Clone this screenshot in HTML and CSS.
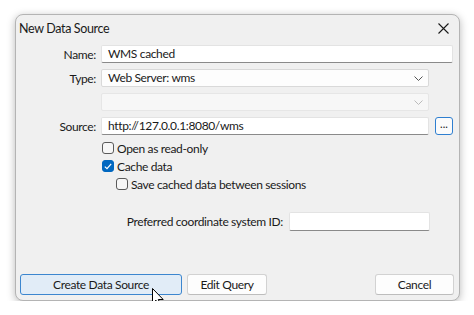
FILE: index.html
```html
<!DOCTYPE html>
<html>
  <head>
    <title>New Data Source</title>
    <link rel="stylesheet" href="styles.css">
  </head>
  <body>
    <article class="dialog">
      <header class="titlebar">
        <span class="title">New Data Source</span>
        <svg class="close" width="11" height="11" viewBox="0 0 11 11">
          <path d="M0.5 0.5 L10.5 10.5 M10.5 0.5 L0.5 10.5" stroke="#1a1a1a" stroke-width="1.1" fill="none"/>
        </svg>
      </header>

      <form class="form">
        <div class="row">
          <label class="label">Name:</label>
          <div class="field wide">WMS cached</div>
        </div>
        <div class="row">
          <label class="label">Type:</label>
          <div class="field select">
            Web Server: wms
            <svg class="chevron" width="9" height="5" viewBox="0 0 9 5"><path d="M0.5 0.5 L4.5 4.5 L8.5 0.5" stroke="#555" fill="none"/></svg>
          </div>
        </div>
        <div class="row">
          <label class="label"></label>
          <div class="field select disabled">
            <svg class="chevron" width="9" height="5" viewBox="0 0 9 5"><path d="M0.5 0.5 L4.5 4.5 L8.5 0.5" stroke="#bbb" fill="none"/></svg>
          </div>
        </div>
        <div class="row">
          <label class="label">Source:</label>
          <div class="field">http://127.0.0.1:8080/wms</div>
          <button type="button" class="browse">...</button>
        </div>

        <div class="checks">
          <div class="check"><span class="box"></span>Open as read-only</div>
          <div class="check"><span class="box checked">
            <svg width="8" height="7" viewBox="0 0 8 7"><path d="M0.8 3.6 L3 5.6 L7.2 0.9" stroke="#fff" stroke-width="1.2" fill="none"/></svg>
          </span>Cache data</div>
          <div class="check sub"><span class="box"></span>Save cached data between sessions</div>
        </div>

        <div class="row crs">
          <label class="crs-label">Preferred coordinate system ID:</label>
          <div class="field crs-field"></div>
        </div>
      </form>

      <footer class="buttons">
        <button type="button" class="btn default">Create Data Source</button>
        <button type="button" class="btn edit">Edit Query</button>
        <button type="button" class="btn cancel">Cancel</button>
      </footer>

      <svg class="cursor" width="13" height="20" viewBox="0 0 13 20">
        <path d="M0.5 0.5 L0.5 15.5 L4 12.2 L6.6 18.3 L8.8 17.4 L6.3 11.5 L11.2 11.5 Z" fill="#fff" stroke="#000" stroke-width="1"/>
      </svg>
    </article>
  </body>
</html>
```

FILE: styles.css
```css
* {
  font-family: 'Lato', sans-serif;
  box-sizing: border-box;
  letter-spacing: -0.35px;
}

body, html {
  margin: 0;
  padding: 0;
  background-color: #fff;
}

.dialog {
  position: relative;
  margin: 14px 0 0 15px;
  width: 445px;
  height: 287px;
  background-color: #f0f0f0;
  border: 1px solid #b4b4b4;
  border-radius: 8px;
  box-shadow: 0 2px 8px rgba(0, 0, 0, 0.28);
  display: flex;
  flex-direction: column;
  color: #1a1a1a;
  font-size: 12px;
}

.titlebar {
  height: 30px;
  display: flex;
  align-items: center;
  justify-content: space-between;
  padding: 0 10px 4px 3px;
}

.title {
  font-size: 12.5px;
}

.form {
  display: flex;
  flex-direction: column;
}

.row {
  display: flex;
  align-items: center;
  height: 18px;
  margin-bottom: 6px;
}

.label {
  width: 80px;
  margin-right: 5px;
  text-align: right;
}

.field {
  position: relative;
  width: 328px;
  height: 18px;
  line-height: 16px;
  padding: 0 6px;
  background-color: #fff;
  border: 1px solid #e3e3e3;
  border-bottom-color: #8a8a8a;
  border-radius: 2px;
}

.field.wide {
  width: 352px;
}

.field.select {
  border-bottom-color: #d6d6d6;
  border-color: #d9d9d9;
  background-color: #fdfdfd;
}

.field.disabled {
  background-color: #f7f7f7;
  border-color: #e6e6e6;
}

.chevron {
  position: absolute;
  right: 5px;
  top: 6px;
}

.browse {
  margin-left: 6px;
  width: 18px;
  height: 18px;
  padding: 0 0 4px;
  font-size: 11px;
  line-height: 10px;
  letter-spacing: 0;
  background-color: #fbfbfb;
  border: 1px solid #2f7fd0;
  border-radius: 3px;
  color: #1a1a1a;
}

.checks {
  margin: -2px 0 0 86px;
  display: flex;
  flex-direction: column;
}

.check {
  display: flex;
  align-items: center;
  height: 18px;
}

.check.sub {
  margin-left: 14px;
}

.box {
  width: 12px;
  height: 12px;
  margin-right: 3px;
  border: 1px solid #5a5a5a;
  border-radius: 3px;
  background-color: #f7f7f7;
  display: flex;
  align-items: center;
  justify-content: center;
}

.box.checked {
  background-color: #0067c0;
  border-color: #0067c0;
}

.crs {
  margin-top: 19px;
  height: 19px;
  justify-content: flex-end;
  padding-right: 29px;
}

.crs-label {
  margin-right: 6px;
}

.crs-field {
  width: 141px;
  height: 19px;
}

.buttons {
  margin-top: auto;
  display: flex;
  padding: 0 5px 5px 4px;
}

.btn {
  height: 21px;
  padding: 0 0 1px;
  font-size: 12px;
  color: #1a1a1a;
  background-color: #fdfdfd;
  border: 1px solid #d2d2d2;
  border-bottom-color: #bdbdbd;
  border-radius: 3px;
}

.btn.default {
  width: 162px;
  background-color: #e1ecf7;
  border: 1px solid #3c86cf;
}

.btn.edit {
  width: 80px;
  margin-left: 5px;
}

.btn.cancel {
  width: 79px;
  margin-left: auto;
}

.cursor {
  position: absolute;
  left: 136px;
  top: 273px;
}
```
